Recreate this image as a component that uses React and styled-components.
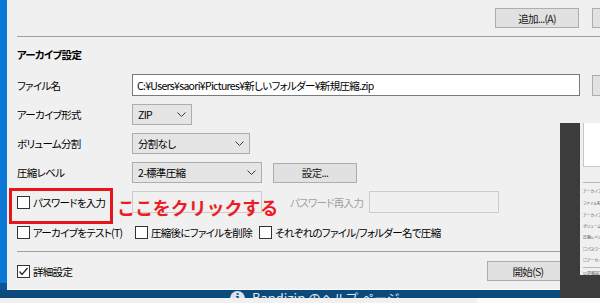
import React from "react";
import styled, { createGlobalStyle } from "styled-components";

const GlobalStyle = createGlobalStyle`
	html, body {
		margin: 0;
		padding: 0;
		background: #f0f0f0;
	}
	* {
		box-sizing: border-box;
	}
`;

const FONT = `"Noto Sans CJK JP", "Noto Sans", sans-serif`;

const Page = styled.div`
	position: relative;
	width: 600px;
	height: 303px;
	overflow: hidden;
	font-family: ${FONT};
	font-size: 10.5px;
	letter-spacing: -0.7px;
	color: #000;
	font-feature-settings: "palt";
	display: flex;
	flex-direction: column;
`;

const Main = styled.div`
	display: flex;
	height: 290px;
	flex: none;
`;

const BlueStrip = styled.div`
	width: 7px;
	flex: none;
	background: linear-gradient(#0a78d4 0 283px, #0b5596 283px);
`;

const Dialog = styled.div`
	width: 615px;
	flex: none;
	padding: 8px 0 0 10px;
	background: #f0f0f0;
	border-bottom: 1px solid #fbfbfb;
	display: flex;
	flex-direction: column;
`;

const TopBar = styled.div`
	display: flex;
	justify-content: flex-end;
	gap: 13px;
	height: 20px;
`;

const Button = styled.div`
	width: ${p => p.$w}px;
	height: ${p => p.$h || 20}px;
	flex: none;
	background: #e1e1e1;
	border: 1px solid #adadad;
	display: flex;
	align-items: center;
	justify-content: center;
	color: #1a1a1a;
	margin-left: ${p => p.$ml || 0}px;
`;

const Rule = styled.div`
	height: 1px;
	background: #a0a0a0;
	margin-top: ${p => p.$mt}px;
`;

const SectionTitle = styled.div`
	margin-top: 10px;
	height: 16px;
	line-height: 16px;
	font-weight: 700;
`;

const Form = styled.div`
	margin-top: 11px;
	display: grid;
	grid-template-columns: 115px 1fr;
	grid-template-rows: 22px 21px 21px 21px 22px;
	row-gap: 8px;
	align-items: center;
`;

const Label = styled.div`
	color: ${p => (p.$disabled ? "#a0a0a0" : "#000")};
	white-space: nowrap;
	width: ${p => (p.$w ? `${p.$w}px` : "auto")};
	flex: none;
	margin-left: ${p => p.$ml || 0}px;
`;

const Field = styled.div`
	display: flex;
	align-items: center;
	height: 100%;
`;

const TextBox = styled.div`
	width: ${p => p.$w}px;
	height: 100%;
	flex: none;
	background: ${p => (p.$disabled ? "#f0f0f0" : "#fff")};
	border: 1px solid ${p => (p.$disabled ? "#cccccc" : "#7a7a7a")};
	padding-left: 4px;
	display: flex;
	align-items: center;
	white-space: nowrap;
	margin-left: ${p => p.$ml || 0}px;
`;

const Select = styled.div`
	width: ${p => p.$w}px;
	height: 21px;
	flex: none;
	background: #e5e5e5;
	border: 1px solid #adadad;
	padding: 0 5px 0 5px;
	display: flex;
	align-items: center;
	justify-content: space-between;
`;

const CheckLabel = styled.label`
	display: flex;
	align-items: center;
	gap: 3px;
	white-space: nowrap;
	width: ${p => (p.$w ? `${p.$w}px` : "auto")};
	flex: none;
`;

const Box = styled.span`
	width: 13px;
	height: 13px;
	flex: none;
	border: 1px solid #333;
	background: #fff;
	display: flex;
	align-items: center;
	justify-content: center;
`;

const Highlighted = styled.div`
	position: relative;
	height: 100%;
	display: flex;
	align-items: center;

	&::after {
		content: "";
		position: absolute;
		left: -8px;
		top: -3px;
		width: 98px;
		height: 30px;
		border: 3px solid #e8141c;
	}
`;

const Annotation = styled.div`
	position: absolute;
	left: -15px;
	top: 50%;
	transform: translateY(calc(-50% + 5px));
	font-size: 18px;
	font-weight: 700;
	color: #ec1c24;
	white-space: nowrap;
	font-feature-settings: normal;
	letter-spacing: -0.1px;
	line-height: 1;
`;

const PasswordField = styled(Field)`
	position: relative;
`;

const CheckRow = styled.div`
	margin-top: 11px;
	height: 16px;
	display: flex;
	align-items: center;
`;

const Footer = styled.div`
	margin-top: 9px;
	height: 20px;
	padding-right: 53px;
	display: flex;
	align-items: center;
	justify-content: space-between;
`;

const TaskBar = styled.div`
	height: 8px;
	flex: none;
	background: #0d4a7c;
	overflow: hidden;
	display: flex;
	padding-left: 230px;
	gap: 7px;
	letter-spacing: 0;
`;

const InfoIcon = styled.span`
	width: 15px;
	height: 15px;
	border-radius: 50%;
	background: #d9e4ee;
	margin-top: 1px;
	flex: none;
	color: #0d4a7c;
	font-family: "DejaVu Serif", serif;
	font-weight: 700;
	font-size: 11px;
	text-align: center;
	line-height: 15px;
`;

const TaskText = styled.span`
	color: #dce8f2;
	font-size: 13px;
	line-height: 13px;
	margin-top: 1px;
	white-space: nowrap;
`;

const BottomStrip = styled.div`
	flex: 1;
	background: linear-gradient(90deg, #f0f0f0 0 477px, #fafafa 477px);
`;

const Snapshot = styled.div`
	position: absolute;
	left: 560px;
	top: 123px;
	width: 40px;
	height: 175px;
	background: #3c3c3c;
	padding-left: 20px;
`;

const MiniDialog = styled.div`
	height: 152px;
	background: #f0f0f0;
	padding-left: 3px;
	display: flex;
	flex-direction: column;
	letter-spacing: 0;
`;

const MiniWhite = styled.div`
	height: 44px;
	background: #fff;
	border-left: 1px solid #c8c8c8;
	border-bottom: 1px solid #c8c8c8;
`;

const MiniRule = styled.div`
	height: 1px;
	background: #b8b8b8;
	margin: ${p => p.$m};
`;

const MiniText = styled.div`
	font-size: 4px;
	line-height: 4px;
	height: 4px;
	color: #555;
	margin-top: ${p => p.$mt}px;
	white-space: nowrap;
	overflow: hidden;
`;

const Chevron = () => (
	<svg width="9" height="5" viewBox="0 0 9 5">
		<polyline points="0.5,0.5 4.5,4.5 8.5,0.5" fill="none" stroke="#3a3a3a" strokeWidth="1" />
	</svg>
);

const Check = ({ checked, children, w }) => (
	<CheckLabel $w={w}>
		<Box>
			{checked && (
				<svg width="11" height="11" viewBox="0 0 11 11">
					<polyline points="1.5,5.5 4,8.5 9.5,2" fill="none" stroke="#222" strokeWidth="1.2" />
				</svg>
			)}
		</Box>
		{children}
	</CheckLabel>
);

const miniRows = [
	["アーカイブ設定", 6],
	["ファイル名", 8],
	["アーカイブ形式", 8],
	["ボリューム分割", 7],
	["圧縮レベル", 7],
	["□パスワード", 8],
	["□アーカイブ", 7],
];

const App = () => (
	<>
		<GlobalStyle />
		<Page>
			<Main>
				<BlueStrip />
				<Dialog>
					<TopBar>
						<Button $w={84}>追加...(A)</Button>
						<Button $w={30} />
					</TopBar>
					<Rule $mt={8} />
					<SectionTitle>アーカイブ設定</SectionTitle>
					<Form>
						<Label>ファイル名</Label>
						<Field>
							<TextBox $w={448}>C:¥Users¥saori¥Pictures¥新しいフォルダー¥新規圧縮.zip</TextBox>
							<Button $w={30} $h={21} $ml={12} />
						</Field>

						<Label>アーカイブ形式</Label>
						<Field>
							<Select $w={60}>ZIP<Chevron /></Select>
						</Field>

						<Label>ボリューム分割</Label>
						<Field>
							<Select $w={118}>分割なし<Chevron /></Select>
						</Field>

						<Label>圧縮レベル</Label>
						<Field>
							<Select $w={130}>2-標準圧縮<Chevron /></Select>
							<Button $w={84} $ml={11}>設定...</Button>
						</Field>

						<Highlighted>
							<Check>パスワードを入力</Check>
						</Highlighted>
						<PasswordField>
							<TextBox $w={130} $disabled />
							<Label $disabled $ml={28} $w={79}>パスワード再入力</Label>
							<TextBox $w={130} $disabled />
							<Annotation>ここをクリックする</Annotation>
						</PasswordField>
					</Form>
					<CheckRow>
						<Check w={118}>アーカイブをテスト(T)</Check>
						<Check w={124}>圧縮後にファイルを削除</Check>
						<Check>それぞれのファイル/フォルダー名で圧縮</Check>
					</CheckRow>
					<Rule $mt={11} />
					<Footer>
						<Check checked>詳細設定</Check>
						<Button $w={82}>開始(S)</Button>
					</Footer>
				</Dialog>
			</Main>
			<TaskBar>
				<InfoIcon>i</InfoIcon>
				<TaskText>Bandizip のヘルプ ページ</TaskText>
			</TaskBar>
			<BottomStrip />
			<Snapshot>
				<MiniDialog>
					<MiniWhite />
					<MiniRule $m="15px 0 0 0" />
					{miniRows.map(([t, mt]) => (
						<MiniText key={t} $mt={mt}>{t}</MiniText>
					))}
					<MiniRule $m="5px 0 0 0" />
					<MiniText $mt={3}>☑詳細設定</MiniText>
				</MiniDialog>
			</Snapshot>
		</Page>
	</>
);

export default App;
